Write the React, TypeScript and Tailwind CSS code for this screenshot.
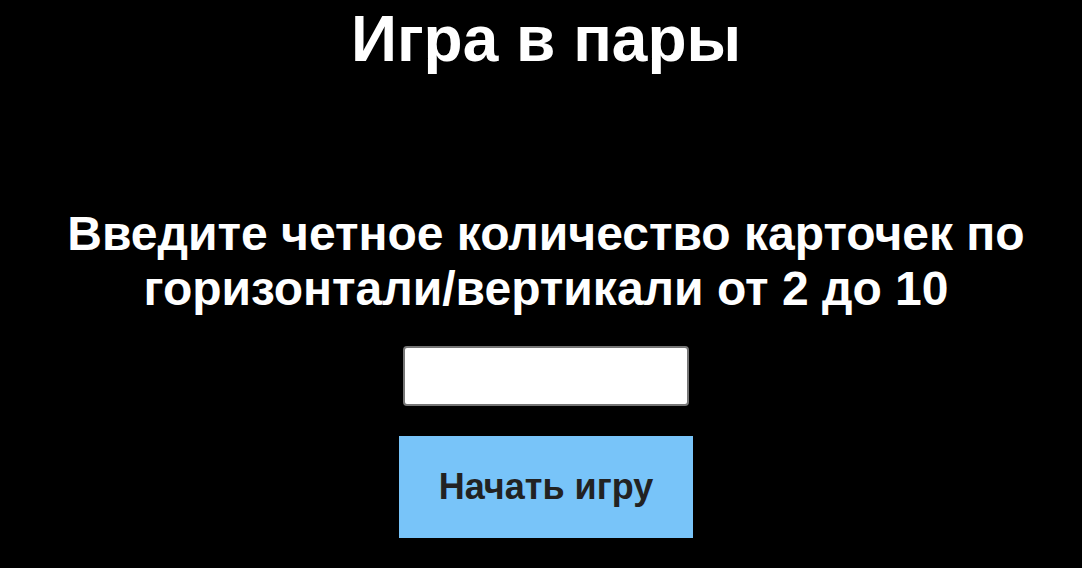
export default function App() {
  return (
    <main className="flex min-h-screen flex-col items-center bg-black pl-[10px] font-['Liberation_Sans',Arial,sans-serif] font-bold">
      <h1 className="pt-1 text-center text-[64px] leading-[70px] text-white">Игра в пары</h1>
      <form
        className="mt-[132px] flex w-full flex-col items-center px-10"
        onSubmit={(event) => event.preventDefault()}
      >
        <label htmlFor="card-count" className="max-w-[980px] text-center text-[48px] leading-[55px] text-white">
          Введите четное количество карточек по горизонтали/вертикали от 2 до 10
        </label>
        <input
          id="card-count"
          type="text"
          inputMode="numeric"
          className="mt-[30px] h-[60px] w-[286px] rounded-[4px] border-2 border-[#767676] bg-white px-2 text-[36px] font-normal text-black"
        />
        <button type="submit" className="mt-[30px] mb-[30px] bg-[#78c4f9] px-10 py-[30px] text-[36px] leading-[42px] text-[#222222]">
          Начать игру
        </button>
      </form>
    </main>
  );
}
